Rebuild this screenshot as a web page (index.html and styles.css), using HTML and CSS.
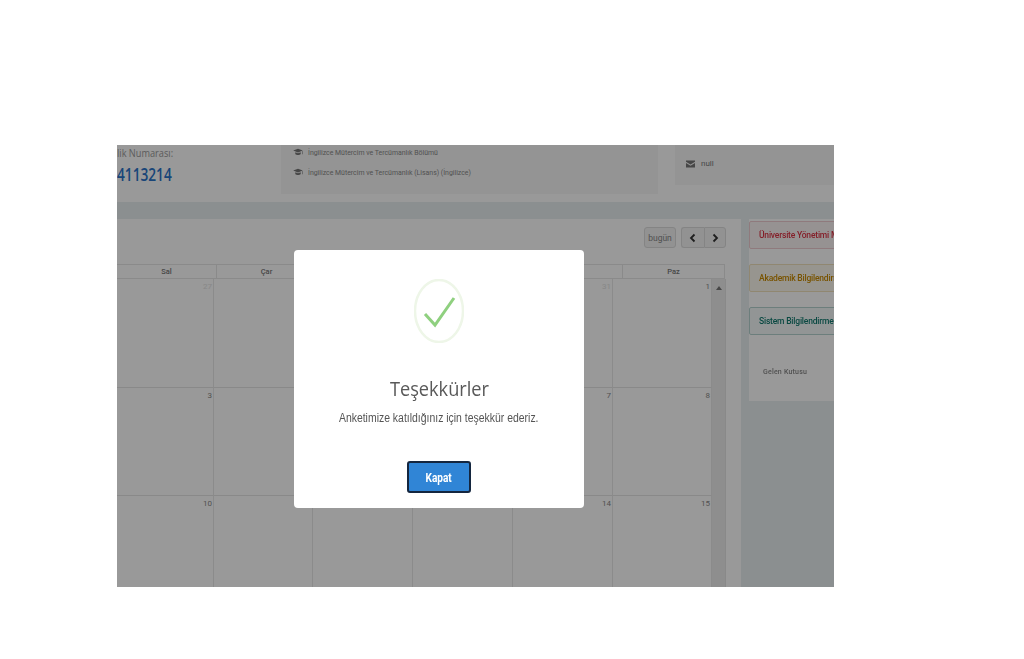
FILE: index.html
```html
<!DOCTYPE html>
<html lang="en">

<head>
    <meta charset="UTF-8">
    <meta name="viewport" content="width=device-width, initial-scale=1.0">
    <title>Teşekkürler</title>
    <link rel="stylesheet" href="styles.css">
</head>

<body>

    <div class="screen">
        <div class="page">
            <div class="top">
                <div class="student">
                    <span class="student-label">lik Numarası:</span>
                    <span class="student-no">4113214</span>
                </div>
                <div class="dept">
                    <p>
                        <svg class="cap" viewBox="0 0 12 10"><path d="M6 1 0 3.2 6 5.6l6-2.4zM2.6 5.2v2.2C4 9 8 9 9.400 7.400V5.200L6 6.600zM11 4.200v3.600h.7V3.900z" /></svg>
                        <span>İngilizce Mütercim ve Tercümanlık Bölümü</span>
                    </p>
                    <p>
                        <svg class="cap" viewBox="0 0 12 10"><path d="M6 1 0 3.2 6 5.6l6-2.4zM2.6 5.2v2.2C4 9 8 9 9.400 7.400V5.200L6 6.600zM11 4.200v3.600h.7V3.900z" /></svg>
                        <span>İngilizce Mütercim ve Tercümanlık (Lisans) (İngilizce)</span>
                    </p>
                </div>
                <div class="contact">
                    <p class="phone-row">0000 0000 000 00 00</p>
                    <p class="null-row">
                        <svg class="mail" viewBox="0 0 10 8"><path d="M0 0h10v1.600L5 4.600 0 1.600zM0 3l5 3 5-3v5H0z" /></svg>
                        null
                    </p>
                </div>
            </div>
            <div class="band"></div>
            <div class="main">
                <div class="calendar">
                    <div class="toolbar">
                        <button class="today">bugün</button>
                        <div class="nav">
                            <button><svg viewBox="0 0 8 10"><path d="M5.500 1.500 2 5l3.500 3.500" /></svg></button>
                            <button><svg viewBox="0 0 8 10"><path d="M2.500 1.500 6 5 2.500 8.500" /></svg></button>
                        </div>
                    </div>
                    <div class="head">
                        <div>Sal</div>
                        <div>Çar</div>
                        <div>Per</div>
                        <div>Cum</div>
                        <div>Cmt</div>
                        <div>Paz</div>
                    </div>
                    <div class="body">
                        <div class="grid">
                            <div class="cell old">27</div><div class="cell"></div><div class="cell"></div><div class="cell"></div><div class="cell old">31</div><div class="cell">1</div>
                            <div class="cell">3</div><div class="cell"></div><div class="cell"></div><div class="cell"></div><div class="cell">7</div><div class="cell">8</div>
                            <div class="cell">10</div><div class="cell"></div><div class="cell"></div><div class="cell"></div><div class="cell">14</div><div class="cell">15</div>
                        </div>
                        <div class="scroll"><span class="arrow"></span></div>
                    </div>
                </div>
                <div class="side">
                    <div class="inbox">
                        <div class="card red">Üniversite Yönetimi M</div>
                        <div class="card yellow">Akademik Bilgilendirme</div>
                        <div class="card teal">Sistem Bilgilendirme</div>
                        <div class="inbox-label">Gelen Kutusu</div>
                    </div>
                </div>
            </div>
        </div>

        <div class="mask">
            <div class="modal">
                <svg class="check" viewBox="0 0 50 64">
                    <ellipse cx="25" cy="32" rx="24" ry="31" fill="none" stroke="#eef6e8" stroke-width="2.500" />
                    <path d="M11 35 21 46 40 19" fill="none" stroke="#8fd07f" stroke-width="3" />
                </svg>
                <h2>Teşekkürler</h2>
                <p>Anketimize katıldığınız için teşekkür ederiz.</p>
                <button class="close"><span>Kapat</span></button>
            </div>
        </div>
    </div>

</body>

</html>
```

FILE: styles.css
```css
html,
body {
    margin: 0;
    padding: 0;
    background-color: #fff;
}

body {
    height: 659px;
    overflow: hidden;
    padding: 145px 0 0 117px;
    box-sizing: border-box;
}

p {
    margin: 0;
}

.screen {
    width: 717px;
    height: 442px;
    position: relative;
    overflow: hidden;
    font-family: "Roboto", "Liberation Sans", sans-serif;
}

.page {
    height: 100%;
    display: flex;
    flex-direction: column;
    background-color: #fff;
    filter: blur(0.6px);
}

/* top info row */
.top {
    height: 57px;
    display: flex;
    align-items: flex-start;
    flex-shrink: 0;
}

.student {
    width: 164px;
    flex-shrink: 0;
    display: flex;
    flex-direction: column;
    align-items: flex-start;
    white-space: nowrap;
    font-family: "Open Sans", sans-serif;
}

.student-label {
    font-size: 11.500px;
    line-height: 16px;
    color: #999;
    transform: scaleX(0.8);
    transform-origin: left;
}

.student-no {
    font-size: 18px;
    line-height: 28px;
    font-weight: 600;
    color: #2a74c9;
    margin-top: -1px;
    transform: scaleX(0.76);
    transform-origin: left;
}

.dept {
    width: 377px;
    height: 49px;
    flex-shrink: 0;
    background-color: #f7f7f7;
    box-sizing: border-box;
    padding: 0 0 0 12px;
    font-size: 8px;
    color: #888;
    overflow: hidden;
}

.dept p {
    height: 20px;
    display: flex;
    align-items: center;
    gap: 5px;
    margin-top: -3px;
    margin-bottom: 3px;
}

.dept span {
    white-space: nowrap;
    transform: scaleX(0.865);
    transform-origin: left;
}

.cap {
    width: 10px;
    height: 8px;
    fill: #777;
}

.contact {
    width: 159px;
    height: 40px;
    margin-left: 17px;
    flex-shrink: 0;
    background-color: #f7f7f7;
    box-sizing: border-box;
    padding: 0 0 0 11px;
    font-size: 8px;
    color: #777;
    overflow: hidden;
}

.phone-row {
    height: 10px;
    line-height: 10px;
    margin-top: -7px;
    padding-left: 16px;
    margin-bottom: 11px;
    white-space: nowrap;
}

.null-row {
    display: flex;
    align-items: center;
    gap: 6px;
}

.mail {
    width: 9px;
    height: 8px;
    fill: #777;
}

.band {
    height: 17px;
    flex-shrink: 0;
    background-color: #e8eef1;
}

/* calendar + side list */
.main {
    flex: 1;
    display: flex;
    min-height: 0;
}

.calendar {
    width: 624px;
    flex-shrink: 0;
    background-color: #fff;
    display: flex;
    flex-direction: column;
}

.toolbar {
    height: 46px;
    flex-shrink: 0;
    box-sizing: border-box;
    padding: 8px 15px 0 0;
    display: flex;
    justify-content: flex-end;
    gap: 5px;
}

.toolbar button {
    height: 21px;
    padding: 0;
    font-family: inherit;
    font-size: 8.500px;
    color: #888;
    background-color: #f3f3f3;
    border: 1px solid #ddd;
    border-radius: 3px;
}

.today {
    width: 32px;
}

.nav {
    display: flex;
}

.nav button {
    width: 22.500px;
    display: flex;
    align-items: center;
    justify-content: center;
}

.nav button:first-child {
    border-right: 0;
    border-radius: 3px 0 0 3px;
}

.nav button:last-child {
    border-radius: 0 3px 3px 0;
}

.nav svg {
    width: 8px;
    height: 10px;
    fill: none;
    stroke: #333;
    stroke-width: 1.800;
}

.head {
    height: 13px;
    width: 608px;
    flex-shrink: 0;
    display: grid;
    grid-template-columns: 100px 100px 103px 100px 103px 102px;
    border-top: 1px solid #e6e6e6;
    border-bottom: 1px solid #e6e6e6;
    box-sizing: content-box;
    margin-top: -1px;
    font-size: 7.500px;
    line-height: 13px;
    text-align: center;
    font-weight: 500;
    color: #777;
}

.head div {
    border-right: 1px solid #e6e6e6;
}

.body {
    flex: 1;
    width: 609px;
    display: flex;
    min-height: 0;
    overflow: hidden;
}

.grid {
    width: 595px;
    flex-shrink: 0;
    display: grid;
    grid-template-columns: 97px 99px 100px 100px 100px 99px;
    grid-auto-rows: 108.500px;
}

.cell {
    border-right: 1px solid #e8e8e8;
    border-bottom: 1px solid #e4e4e4;
    box-sizing: border-box;
    padding: 2px 1px 0 0;
    text-align: right;
    font-size: 8px;
    line-height: 12px;
    color: #888;
}

.cell.old {
    color: #e2e2e2;
}

.scroll {
    flex: 1;
    background-color: #ededed;
    border-right: 1px solid #e4e4e4;
    display: flex;
    justify-content: center;
    padding-top: 7px;
}

.arrow {
    width: 0;
    height: 0;
    border-left: 3px solid transparent;
    border-right: 3px solid transparent;
    border-bottom: 4px solid #777;
}

.side {
    flex: 1;
    background-color: #e8eef1;
    padding-left: 8px;
}

.inbox {
    height: 182px;
    background-color: #fff;
    box-sizing: border-box;
    padding-top: 2px;
    display: flex;
    flex-direction: column;
    overflow: hidden;
}

.card {
    height: 28px;
    flex-shrink: 0;
    margin-bottom: 15px;
    box-sizing: border-box;
    padding-left: 9px;
    width: 110px;
    border: 1px solid;
    border-radius: 2px;
    font-size: 8.500px;
    line-height: 26px;
    font-weight: 500;
    letter-spacing: -0.2px;
    white-space: nowrap;
    overflow: hidden;
}

.red {
    color: #dc3545;
    border-color: #efccd0;
    background-color: #fbf3f4;
}

.yellow {
    color: #c98a00;
    border-color: #f0e2bc;
    background-color: #fcf9ef;
}

.teal {
    color: #117a6f;
    border-color: #b5d2cf;
    background-color: #f4f9f9;
}

.inbox-label {
    margin: 18px 0 0 14px;
    font-size: 7px;
    font-weight: 500;
    color: #888;
    letter-spacing: 0.2px;
}

/* sweet alert style dialog */
.mask {
    position: absolute;
    top: 0;
    left: 0;
    right: 0;
    bottom: 0;
    background-color: rgba(0, 0, 0, 0.4);
}

.modal {
    position: absolute;
    left: 177px;
    top: 105px;
    width: 290px;
    height: 258px;
    background-color: #fff;
    border-radius: 4px;
    display: flex;
    flex-direction: column;
    align-items: center;
    box-sizing: border-box;
    padding-top: 29px;
    filter: blur(0.3px);
}

.check {
    width: 50px;
    height: 64px;
    flex-shrink: 0;
}

.modal h2 {
    margin: 32px 0 0;
    font-family: "Open Sans", sans-serif;
    font-size: 20px;
    line-height: 28px;
    font-weight: 500;
    color: #595959;
    transform: scaleX(0.91);
}

.modal p {
    margin-top: 7px;
    font-family: "Liberation Sans", sans-serif;
    font-size: 12px;
    line-height: 16px;
    white-space: nowrap;
    color: #545454;
    transform: scaleX(0.87);
}

.close {
    width: 64px;
    height: 32px;
    margin-top: 35px;
    padding: 1px 0 0;
    background-color: #3085d6;
    border: 2px solid #14263f;
    border-radius: 3px;
    color: #fff;
    font-family: "Roboto", sans-serif;
    font-size: 12px;
    font-weight: 700;
}

.close span {
    display: inline-block;
    transform: scaleX(0.84);
}
```
